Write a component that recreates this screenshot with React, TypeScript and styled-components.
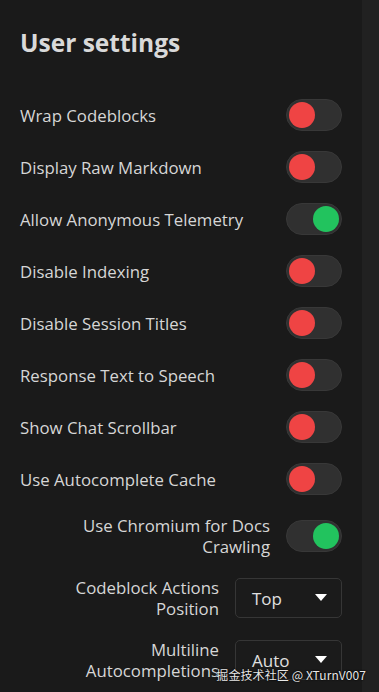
import React from "react";
import styled, { createGlobalStyle } from "styled-components";

const Global = createGlobalStyle`
  html, body { margin: 0; padding: 0; background: #1a1a1a; }
  body { font-family: "Open Sans", "Noto Sans", sans-serif; }
`;

const Wrapper = styled.div`
  position: relative;
  height: 692px;
  overflow: hidden;
`;

const Page = styled.div`
  display: flex;
  min-height: 692px;
  background: #1a1a1a;
`;

const Main = styled.main`
  width: 362px;
  box-sizing: border-box;
  padding: 26px 20px 20px 20px;
  display: flex;
  flex-direction: column;
`;

const Strip = styled.div`
  flex: 1;
  background: #212121;
`;

const Title = styled.h1`
  margin: 0 0 39px 0;
  font-size: 24.5px;
  line-height: 34px;
  font-weight: 700;
  color: #d9d9d9;
`;

const List = styled.div`
  display: flex;
  flex-direction: column;
  gap: 20px;
`;

const Row = styled.div`
  display: flex;
  align-items: center;
  justify-content: space-between;
  gap: 16px;
`;

const Label = styled.span`
  font-size: 16.8px;
  line-height: 21px;
  color: #d6d6d6;
  text-align: right;
`;

const Track = styled.div<{ $on: boolean }>`
  flex: none;
  width: 56px;
  height: 32px;
  box-sizing: border-box;
  border-radius: 16px;
  background: #303030;
  border: 1px solid #383838;
  display: flex;
  align-items: center;
  justify-content: ${(p) => (p.$on ? "flex-end" : "flex-start")};
  padding: 0 2px;
`;

const Knob = styled.div<{ $on: boolean }>`
  width: 26px;
  height: 26px;
  border-radius: 50%;
  background: ${(p) => (p.$on ? "#22c35e" : "#ef4444")};
`;

const Select = styled.div`
  flex: none;
  width: 107px;
  height: 40px;
  box-sizing: border-box;
  border: 1px solid #363636;
  border-radius: 5px;
  background: #1b1b1b;
  display: flex;
  align-items: center;
  justify-content: space-between;
  padding: 0 14px 0 16px;
  font-size: 17px;
  color: #e0e0e0;
`;

const Caret = styled.svg`
  width: 12px;
  height: 8px;
`;

const Watermark = styled.div`
  position: absolute;
  right: 13px;
  bottom: 9px;
  font-family: "Noto Sans CJK SC", "Noto Sans", sans-serif;
  font-size: 12px;
  color: #e8e8e8;
  text-shadow: 0 0 2px #000, 0 0 1px #000;
  letter-spacing: 0.1px;
`;

const toggles: [string, boolean][] = [
  ["Wrap Codeblocks", false],
  ["Display Raw Markdown", false],
  ["Allow Anonymous Telemetry", true],
  ["Disable Indexing", false],
  ["Disable Session Titles", false],
  ["Response Text to Speech", false],
  ["Show Chat Scrollbar", false],
  ["Use Autocomplete Cache", false],
  ["Use Chromium for Docs Crawling", true],
];

const selects: [string, string][] = [
  ["Codeblock Actions Position", "Top"],
  ["Multiline Autocompletions", "Auto"],
];

export default function App() {
  return (
    <Wrapper>
      <Global />
      <Page>
        <Main>
          <Title>User settings</Title>
          <List>
            {toggles.map(([label, on]) => (
              <Row key={label}>
                <Label>{label}</Label>
                <Track $on={on}>
                  <Knob $on={on} />
                </Track>
              </Row>
            ))}
            {selects.map(([label, value]) => (
              <Row key={label}>
                <Label>{label}</Label>
                <Select>
                  <span>{value}</span>
                  <Caret viewBox="0 0 12 8">
                    <path d="M0 0 L12 0 L6 7 Z" fill="#ffffff" />
                  </Caret>
                </Select>
              </Row>
            ))}
          </List>
        </Main>
        <Strip />
      </Page>
      <Watermark>掘金技术社区 @ XTurnV007</Watermark>
    </Wrapper>
  );
}
